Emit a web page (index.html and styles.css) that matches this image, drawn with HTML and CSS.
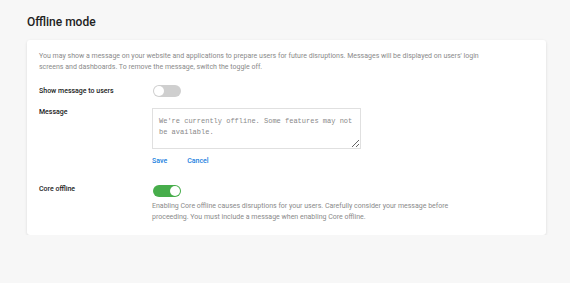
FILE: index.html
```html
<!DOCTYPE html>
<html lang="en">
<head>
    <meta charset="UTF-8">
    <meta name="viewport" content="width=device-width, initial-scale=1.0">
    <title>Offline mode</title>
    <link rel="stylesheet" href="styles.css">
</head>
<body>
    <div class="page">
        <h1 class="page-title">Offline mode</h1>

        <div class="card">
            <p class="intro">You may show a message on your website and applications to prepare users for future disruptions. Messages will be displayed on users' login screens and dashboards. To remove the message, switch the toggle off.</p>

            <div class="form-grid">
                <label class="field-label center">Show message to users</label>
                <div class="field">
                    <span class="toggle"><span class="knob"></span></span>
                </div>

                <label class="field-label">Message</label>
                <div class="field">
                    <textarea class="message-box">We're currently offline. Some features may not be available.</textarea>
                    <div class="actions">
                        <a href="#" class="link-btn">Save</a>
                        <a href="#" class="link-btn">Cancel</a>
                    </div>
                </div>

                <label class="field-label core">Core offline</label>
                <div class="field core">
                    <span class="toggle on"><span class="knob"></span></span>
                    <p class="hint">Enabling Core offline causes disruptions for your users. Carefully consider your message before proceeding. You must include a message when enabling Core offline.</p>
                </div>
            </div>
        </div>
    </div>
</body>
</html>
```

FILE: styles.css
```css
:root {
    --text: #222;
    --muted: #8a8a8a;
    --bg: #f7f7f7;
    --border: #e0e0e0;
    --blue: #1a7fe0;
    --green: #47ad4b;
}

* {
    margin: 0;
    padding: 0;
    box-sizing: border-box;
}

body {
    font-family: Roboto, "Noto Sans", sans-serif;
    background: var(--bg);
    color: var(--text);
}

.page {
    padding: 15px 24px 0 27px;
}

.page-title {
    font-size: 12px;
    line-height: 14px;
    font-weight: 500;
    margin-bottom: 11px;
}

.card {
    background: white;
    border-radius: 3px;
    box-shadow: 0 1px 3px rgba(0,0,0,0.12);
    padding: 11px 12px 12px;
}

.intro {
    font-size: 7px;
    line-height: 10.5px;
    color: var(--muted);
    max-width: 450px;
}

.form-grid {
    display: grid;
    grid-template-columns: 113px 1fr;
    row-gap: 10px;
    margin-top: 13px;
}

.field-label {
    font-size: 7px;
    line-height: 10.5px;
    font-weight: 500;
    color: var(--text);
}

.field-label.center {
    align-self: center;
}

.field-label.core {
    margin-top: 7px;
}

.field.core {
    margin-top: 8px;
}

.toggle {
    display: block;
    position: relative;
    width: 28px;
    height: 12px;
    margin-left: 1px;
    border-radius: 6px;
    background: #cfcfcf;
}

.toggle .knob {
    position: absolute;
    top: 1px;
    left: 1px;
    width: 10px;
    height: 10px;
    border-radius: 50%;
    background: white;
}

.toggle.on {
    background: var(--green);
}

.toggle.on .knob {
    left: 17px;
}

.message-box {
    display: block;
    width: 209px;
    height: 41px;
    margin-top: 1px;
    padding: 7px 6px;
    border: 1px solid var(--border);
    border-radius: 0;
    font-family: "Liberation Mono", monospace;
    font-size: 7px;
    line-height: 11px;
    color: var(--muted);
    resize: vertical;
    outline: none;
}

.actions {
    display: flex;
    gap: 20px;
    margin-top: 7px;
}

.link-btn {
    font-size: 7px;
    line-height: 10.5px;
    font-weight: 500;
    color: var(--blue);
    text-decoration: none;
}

.hint {
    font-size: 7px;
    line-height: 11px;
    color: var(--muted);
    max-width: 315px;
    margin-top: 4px;
}
```
